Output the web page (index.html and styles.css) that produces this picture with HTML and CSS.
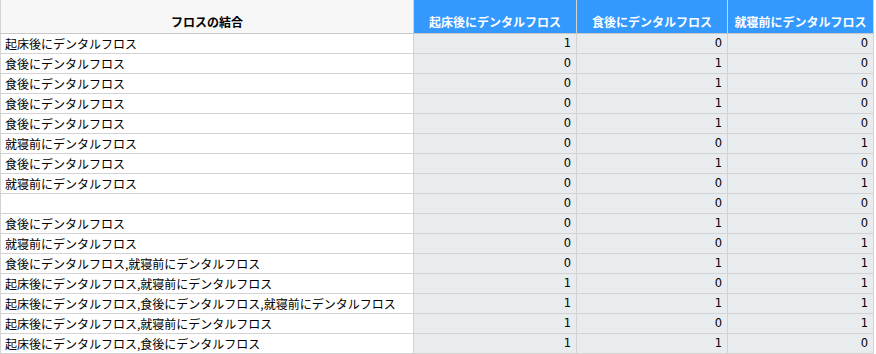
FILE: index.html
```html
<!DOCTYPE html>
<html lang="ja">
<head>
<meta charset="utf-8">
<link rel="stylesheet" href="styles.css">
</head>
<body>
<table class="grid">
  <colgroup>
    <col class="c-label">
    <col class="c-a">
    <col class="c-b">
    <col class="c-c">
  </colgroup>
  <thead>
    <tr>
      <th class="h-label">フロスの結合</th>
      <th class="h-num">起床後にデンタルフロス</th>
      <th class="h-num">食後にデンタルフロス</th>
      <th class="h-num">就寝前にデンタルフロス</th>
    </tr>
  </thead>
  <tbody>
    <tr><td class="lbl">起床後にデンタルフロス</td><td class="num">1</td><td class="num">0</td><td class="num">0</td></tr>
    <tr><td class="lbl">食後にデンタルフロス</td><td class="num">0</td><td class="num">1</td><td class="num">0</td></tr>
    <tr><td class="lbl">食後にデンタルフロス</td><td class="num">0</td><td class="num">1</td><td class="num">0</td></tr>
    <tr><td class="lbl">食後にデンタルフロス</td><td class="num">0</td><td class="num">1</td><td class="num">0</td></tr>
    <tr><td class="lbl">食後にデンタルフロス</td><td class="num">0</td><td class="num">1</td><td class="num">0</td></tr>
    <tr><td class="lbl">就寝前にデンタルフロス</td><td class="num">0</td><td class="num">0</td><td class="num">1</td></tr>
    <tr><td class="lbl">食後にデンタルフロス</td><td class="num">0</td><td class="num">1</td><td class="num">0</td></tr>
    <tr><td class="lbl">就寝前にデンタルフロス</td><td class="num">0</td><td class="num">0</td><td class="num">1</td></tr>
    <tr><td class="lbl"></td><td class="num">0</td><td class="num">0</td><td class="num">0</td></tr>
    <tr><td class="lbl">食後にデンタルフロス</td><td class="num">0</td><td class="num">1</td><td class="num">0</td></tr>
    <tr><td class="lbl">就寝前にデンタルフロス</td><td class="num">0</td><td class="num">0</td><td class="num">1</td></tr>
    <tr><td class="lbl">食後にデンタルフロス,就寝前にデンタルフロス</td><td class="num">0</td><td class="num">1</td><td class="num">1</td></tr>
    <tr><td class="lbl">起床後にデンタルフロス,就寝前にデンタルフロス</td><td class="num">1</td><td class="num">0</td><td class="num">1</td></tr>
    <tr><td class="lbl">起床後にデンタルフロス,食後にデンタルフロス,就寝前にデンタルフロス</td><td class="num">1</td><td class="num">1</td><td class="num">1</td></tr>
    <tr><td class="lbl">起床後にデンタルフロス,就寝前にデンタルフロス</td><td class="num">1</td><td class="num">0</td><td class="num">1</td></tr>
    <tr><td class="lbl">起床後にデンタルフロス,食後にデンタルフロス</td><td class="num">1</td><td class="num">1</td><td class="num">0</td></tr>
  </tbody>
</table>
</body>
</html>
```

FILE: styles.css
```css
html, body {
  margin: 0;
  padding: 0;
  background: #ffffff;
}

body {
  font-family: "Noto Sans CJK JP", "Noto Sans", sans-serif;
  font-size: 12px;
  color: #000000;
}

.grid {
  border-collapse: collapse;
  table-layout: fixed;
  width: 873px;
}

.c-label { width: 413px; }
.c-a { width: 163px; }
.c-b { width: 151px; }
.c-c { width: 146px; }

.grid th {
  height: 30px;
  padding: 0 4px 3px;
  vertical-align: bottom;
  text-align: center;
  font-weight: bold;
  line-height: 16px;
  white-space: nowrap;
  border-left: 1px solid #d3d3d3;
  border-right: 1px solid #d3d3d3;
  border-bottom: 1px solid #c8c8c8;
}

.h-label {
  background: #f7f7f7;
  color: #000000;
}

.h-num {
  background: #3399ff;
  color: #ffffff;
}

.grid td {
  height: 19px;
  padding: 0 5px 0 4px;
  line-height: 19px;
  white-space: nowrap;
  overflow: hidden;
  border: 1px solid #d3d3d3;
}

.lbl {
  background: #ffffff;
  text-align: left;
}

.num {
  background: #e9ecef;
  text-align: right;
  font-family: "DejaVu Sans", "Noto Sans CJK JP", sans-serif;
  font-size: 11.5px;
}
```
